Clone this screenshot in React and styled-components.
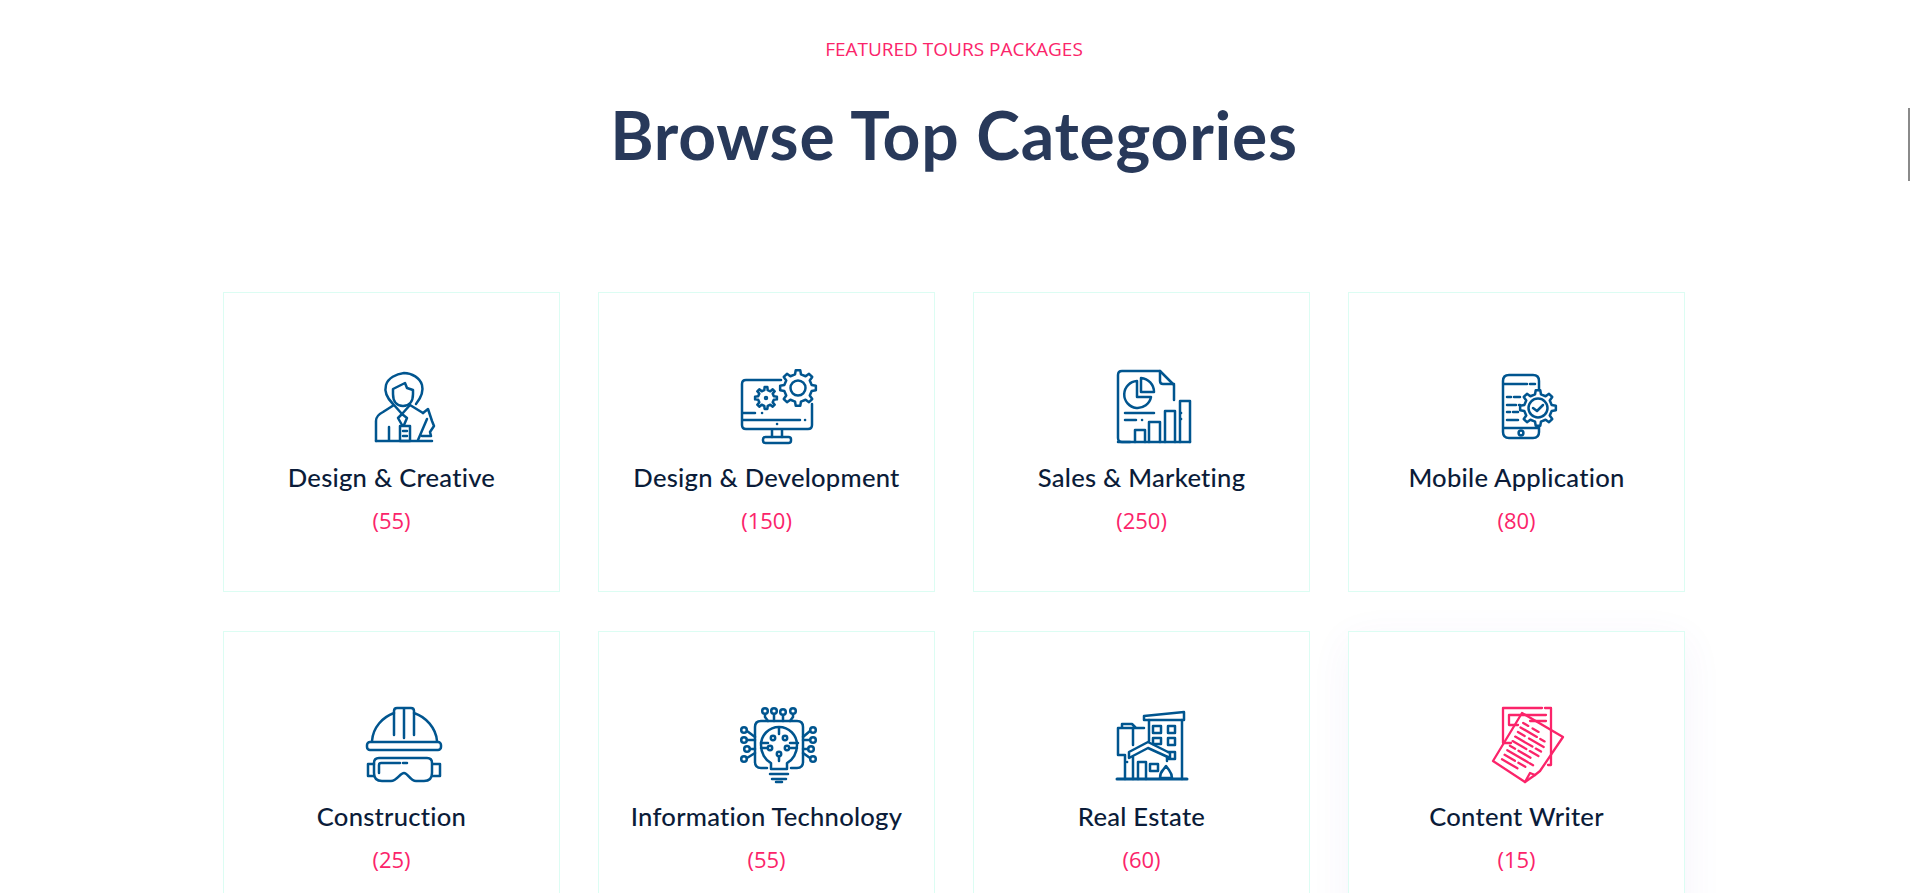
import React from "react";
import styled, { createGlobalStyle } from "styled-components";

const Global = createGlobalStyle`
  html, body { margin: 0; padding: 0; height: 893px; overflow: hidden; background: #fff; }
`;

const Page = styled.main`
  width: 1908px;
  height: 893px;
  overflow: hidden;
`;
const Header = styled.header`
  display: flex;
  flex-direction: column;
  align-items: center;
  padding-top: 36px;
  height: 255.5px;
  box-sizing: border-box;
`;
const Eyebrow = styled.span`
  font: 400 19px/26px "Open Sans", sans-serif;
  color: #fb246a;
`;
const Heading = styled.h1`
  margin: 37px 0 0;
  font: 700 66px/72px Lato, sans-serif;
  letter-spacing: 0.75px;
  color: #28395a;
`;
const Grid = styled.section`
  display: grid;
  grid-template-columns: repeat(4, 337px);
  gap: 39px 38px;
  justify-content: center;
  margin-top: 36px;
`;
const Card = styled.article`
  box-sizing: border-box;
  height: 300px;
  border: 1px solid #dcfdf3;
  background: #fff;
  display: flex;
  flex-direction: column;
  align-items: flex-start;
  padding-top: 63px;
  box-shadow: ${(p) => (p.$raised ? "0 10px 40px rgba(110, 70, 190, 0.06)" : "none")};
`;
const IconBox = styled.div`
  width: 100px;
  height: 90px;
  margin-left: 126px;
  color: ${(p) => (p.$pink ? "#fb246a" : "#00558f")};
  svg { display: block; }
`;
const Title = styled.h5`
  margin: 15px 0 0;
  width: 100%;
  text-align: center;
  font: 500 25.6px/32px Lato, sans-serif;
  letter-spacing: 0.25px;
  color: #0b1c39;
`;
const Count = styled.span`
  margin-top: 12px;
  width: 100%;
  text-align: center;
  font: 400 22px/30px "Open Sans", sans-serif;
  color: #fb246a;
`;
const ScrollMark = styled.div`
  position: fixed;
  left: 1908px;
  top: 108px;
  width: 2px;
  height: 73px;
  background: #8a8a8a;
`;

function gear(cx, cy, ro, ri, n) {
  const pts = [];
  const step = (Math.PI * 2) / n;
  for (let i = 0; i < n; i++) {
    const a = i * step - Math.PI / 2;
    const w = step * 0.2;
    const list = [
      [ri, a - w * 1.35],
      [ro, a - w * 0.8],
      [ro, a + w * 0.8],
      [ri, a + w * 1.35],
    ];
    list.forEach(([r, t]) => {
      pts.push(`${(cx + r * Math.cos(t)).toFixed(2)} ${(cy + r * Math.sin(t)).toFixed(2)}`);
    });
  }
  return `M${pts.join(" L")} Z`;
}

const Svg = ({ dx = 0, dy = 0, sw = 2.5, children }) => (
  <svg width="100" height="90" viewBox="0 0 100 90" fill="none" stroke="currentColor" strokeWidth={sw} strokeLinecap="round" strokeLinejoin="round">
    <g transform={`translate(${dx} ${dy})`}>{children}</g>
  </svg>
);

const Person = () => (
  <Svg dx={-10} dy={4}>
    <path d="M53 44C47 38 44 32 46 25C48 18 56 14 64 13C72 13 80 18 82 25C84 32 80 39 76 44" />
    <path d="M53 29L65 23L67 28L73 30V34C73 42 69 46 63 46C57 46 53 42 53 34Z" />
    <path d="M36 81V61C36 57 39 54 43 52L54 45L62 54L70 45L83 53" />
    <path d="M62 54L58 58L62 65M62 54L67 58L64 65" />
    <path d="M36 81H92M49 67V81" />
    <rect x="60" y="66" width="10" height="15" />
    <path d="M63 71H67M63 76H67" />
    <path d="M78 80L87 59M83 53L88 49L92 61L94 66L90 72L91 76H82" />
  </Svg>
);

const Monitor = () => (
  <Svg dx={5} dy={4}>
    <path d="M51 20H16Q12 20 12 24V65Q12 69 16 69H78Q82 69 82 65V44" />
    <path d={gear(68, 28, 18, 14, 8)} />
    <circle cx="68" cy="28" r="7.5" />
    <path d={gear(36, 38, 11, 8, 8)} />
    <circle cx="36" cy="38" r="1" />
    <path d="M13 53H25M32 53H32.1M13 60H70M75 60H75.1M47 64H47.1" />
    <path d="M42 70V77M52 70V77" />
    <rect x="33" y="77" width="28" height="6" rx="2.5" />
  </Svg>
);

const Report = () => (
  <Svg dy={4}>
    <path d="M30 82H22Q18 82 18 78V15Q18 11 22 11H60L74 25V40" />
    <path d="M60 11V21Q60 24 63 24H74" />
    <path d="M37 21A13.5 13.5 0 1 0 51 37H37Z" />
    <path d="M41 18A14 14 0 0 1 54 32H41Z" />
    <path d="M25 53H54M25 60H36M42 60H42.1" />
    <path d="M18 82H90" />
    <path d="M35 82V70H45V82M49 82V62H60V82M65 82V51H75V82M80 82V41H90V82" />
    <path d="M81 53H81.1M81 59H81.1" />
  </Svg>
);

const Phone = () => (
  <Svg dx={5} dy={4}>
    <path d="M59 30V21Q59 15 53 15H29Q23 15 23 21V72Q23 78 29 78H53Q59 78 59 72V67" />
    <path d="M24 24H47M50 24H55M24 68H58" />
    <circle cx="41" cy="73" r="2.4" />
    <path d="M27 37H31M34 37H40M27 45H36M39 45H40M27 52H30M33 52H38M27 60H38" />
    <path d={gear(58, 48, 18, 14, 8)} />
    <circle cx="58" cy="48" r="9.5" />
    <path d="M53 48L57 51L63 45" />
  </Svg>
);

const Helmet = () => (
  <Svg>
    <path d="M22 46C23 32 33 22 44 18V16Q44 13 47 13H61Q64 13 64 16V18C76 22 86 33 87 46" />
    <path d="M44 18V40M54 14V43M64 18V40" />
    <rect x="17" y="47" width="74" height="8" rx="3" />
    <path d="M24 68Q24 63 29 63H77Q82 63 82 68V78Q82 86 74 86H66C60 86 58 78 54 78C50 78 47 86 41 86H32Q24 86 24 78Z" />
    <path d="M29 78V70Q29 68 31 68H50M53 68H57" />
    <path d="M24 69H18V81H24M83 69H90V81H83" />
  </Svg>
);

const Bulb = () => {
  const nodes = [
    [35, 16, "M35 19V22L38 26"], [44, 16, "M44 19V26"], [53, 17, "M53 20V26"], [63, 16, "M63 19V22L60 26"],
    [14, 35, "M17 36L25 42"], [14, 45, "M17 45H25"], [17, 54, "M20 54H25"], [14, 64, "M17 63L25 58"],
    [83, 35, "M80 36L73 42"], [83, 45, "M80 45H73"], [81, 54, "M78 54H73"], [83, 64, "M80 63L73 58"],
  ];
  return (
    <Svg dx={5}>
      <path d="M37 73H31Q25 73 25 67V32Q25 26 31 26H67Q73 26 73 32V67Q73 73 67 73H61" />
      <path d="M41 68C35 65 31 58 31 50C31 40 39 32 49 32C59 32 67 40 67 50C67 58 63 65 57 68V74H41Z" />
      <path d="M40 79H58M42 84H56M46 87H52" />
      <path d="M31 48H38M68 48H60M49 66V62" />
      <path d="M49 33V39M31 53H37M67 53H61" />
      <circle cx="43" cy="43" r="2.2" />
      <circle cx="55" cy="43" r="2.2" />
      <circle cx="40" cy="53" r="2.2" />
      <circle cx="57" cy="53" r="2.2" />
      <circle cx="49" cy="59" r="2.2" />
      {nodes.map(([x, y, d]) => (
        <g key={`${x}-${y}`}>
          <circle cx={x} cy={y} r="2.8" />
          <path d={d} />
        </g>
      ))}
    </Svg>
  );
};

const Estate = () => (
  <Svg>
    <path d="M17 84H87" strokeWidth="3" />
    <path d="M44 25V21L84 17V25H44Z" />
    <path d="M49 25V46M82 25V84" />
    <path d="M53 31H61V38H53ZM68 31H75V38H68ZM53 43H61V49H53ZM68 43H75V50H68ZM68 57H75V64H69" />
    <path d="M44 33H18V60H25V84M22 33V29H32L36 33M33 33V50" />
    <path d="M27 67H27.1" />
    <path d="M29 57L48 47L70 58V63L48 53L29 63Z" />
    <path d="M33 62V84M67 62V66" />
    <path d="M38 84V67H46V84" />
    <rect x="50" y="69" width="8" height="7" />
    <path d="M60 83Q60 78 63 75L66 71L69 75Q72 79 72 83Z" />
  </Svg>
);

const Papers = () => {
  const ux = 0.86, uy = 0.5, vx = -0.5, vy = 0.86;
  const ox = 42, oy = 18;
  const rows = [
    [[6, 12], [17, 24]], [[6, 25], [29, 34]], [[6, 14], [19, 36]], [[6, 26], [30, 36]],
    [[6, 22], [26, 36]], [[6, 12], [16, 30]], [[6, 30], [32, 36]], [[6, 18], [22, 30]], [[6, 24]],
  ];
  const segs = [];
  rows.forEach((r, i) => {
    const d = 8 + i * 5.3;
    r.forEach(([a, b]) => {
      const sx = ox + ux * a + vx * d, sy = oy + uy * a + vy * d;
      const ex = ox + ux * b + vx * d, ey = oy + uy * b + vy * d;
      segs.push(`M${sx.toFixed(1)} ${sy.toFixed(1)}L${ex.toFixed(1)} ${ey.toFixed(1)}`);
    });
  });
  return (
    <Svg dx={5} sw={2.3}>
      <path d="M31 48H23V13H62M65 13H71V70H68" />
      <path d="M38 30H29V20H66M50 26H66" />
      <path d="M42 18L83 42L60 76L55 80L45 87L13 66Z" />
      <path d="M45 87L50 78L55 80" />
      <path d={segs.join("")} strokeWidth="2.3" />
    </Svg>
  );
};

const ITEMS = [
  { title: "Design & Creative", count: 55, Icon: Person },
  { title: "Design & Development", count: 150, Icon: Monitor },
  { title: "Sales & Marketing", count: 250, Icon: Report },
  { title: "Mobile Application", count: 80, Icon: Phone },
  { title: "Construction", count: 25, Icon: Helmet },
  { title: "Information Technology", count: 55, Icon: Bulb },
  { title: "Real Estate", count: 60, Icon: Estate },
  { title: "Content Writer", count: 15, Icon: Papers, active: true },
];

export default function App() {
  return (
    <Page>
      <Global />
      <Header>
        <Eyebrow>FEATURED TOURS PACKAGES</Eyebrow>
        <Heading>Browse Top Categories</Heading>
      </Header>
      <Grid>
        {ITEMS.map(({ title, count, Icon, active }) => (
          <Card key={title} $raised={active}>
            <IconBox $pink={active}>
              <Icon />
            </IconBox>
            <Title>{title}</Title>
            <Count>({count})</Count>
          </Card>
        ))}
      </Grid>
      <ScrollMark />
    </Page>
  );
}
